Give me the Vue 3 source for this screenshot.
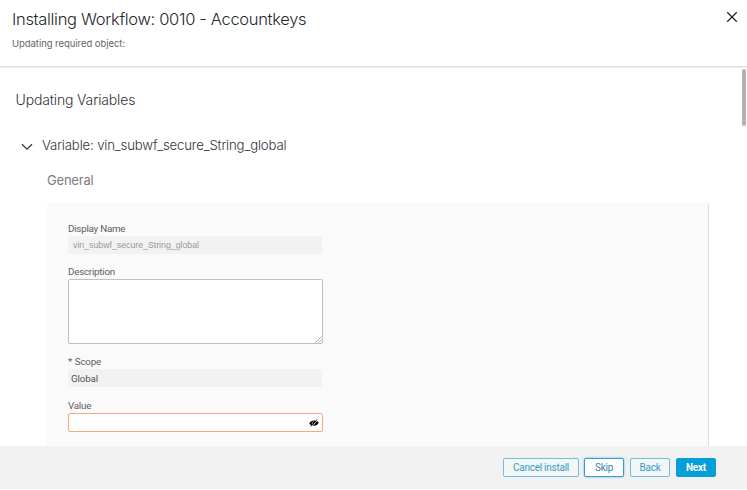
<script setup>
import { ref } from 'vue'

const displayName = ref('vin_subwf_secure_String_global')
const description = ref('')
const scope = ref('Global')
const secret = ref('')
const actions = [
  { label: 'Cancel install', kind: 'cancel' },
  { label: 'Skip', kind: 'skip' },
  { label: 'Back', kind: 'back' },
  { label: 'Next', kind: 'next' },
]
</script>

<template>
  <div class="dialog">
    <header class="header">
      <div>
        <h1 class="title"><span>Installing Workflow: 0010 - Accountkeys</span></h1>
        <p class="subtitle"><span>Updating required object:</span></p>
      </div>
      <svg class="close" width="12" height="12" viewBox="0 0 12 12">
        <path d="M1.2 1.2 10.8 10.8M10.8 1.2 1.2 10.8" fill="none" stroke="#222629" stroke-width="1.25" />
      </svg>
    </header>

    <main class="body">
      <div class="content">
        <h2 class="section"><span>Updating Variables</span></h2>
        <div class="variable">
          <svg class="chevron" width="12" height="8" viewBox="0 0 12 8">
            <path d="M1 1.3 6 6.2 11 1.3" fill="none" stroke="#34383b" stroke-width="1.3" />
          </svg>
          <h3 class="variable-name"><span>Variable: vin_subwf_secure_String_global</span></h3>
        </div>
        <h4 class="group"><span>General</span></h4>
        <div class="panel">
          <label class="label first"><span>Display Name</span></label>
          <div class="readonly muted"><span>{{ displayName }}</span></div>
          <label class="label second"><span>Description</span></label>
          <div class="area-wrap">
            <textarea v-model="description" class="area"></textarea>
            <svg class="grip" width="7" height="7" viewBox="0 0 7 7">
              <path d="M.5 6.5 6.5.5M3.5 6.5 6.5 3.5" fill="none" stroke="#929496" stroke-width=".8" />
            </svg>
          </div>
          <label class="label third"><span>* Scope</span></label>
          <div class="readonly"><span>{{ scope }}</span></div>
          <label class="label fourth"><span>Value</span></label>
          <div class="secret">
            <input v-model="secret" type="password" />
            <svg width="10" height="10" viewBox="0 0 10 10">
              <path d="M.3 5.4C1.6 1.9 8.2 1.6 9.7 4.8 8.4 8.6 2 8.8.3 5.4Z" fill="#0b0b0b" />
              <path d="M3.4 6.2Q2.9 4.2 4.6 3.6" fill="none" stroke="#fff" stroke-width=".5" />
              <path d="M2.2 9 8.9 1.9" stroke="#fff" stroke-width=".7" />
              <path d="M1.5 8.6 8.3 1.2" stroke="#111" stroke-width=".8" />
            </svg>
          </div>
        </div>
      </div>
      <div class="track"><div class="thumb"></div></div>
    </main>

    <footer class="footer">
      <button v-for="a in actions" :key="a.label" class="btn" :class="a.kind"><span>{{ a.label }}</span></button>
    </footer>
  </div>
</template>

<style>
body {
  background: #fff;
  overflow: hidden;
}
</style>

<style scoped>
* {
  box-sizing: border-box;
  margin: 0;
}
.dialog {
  width: 747px;
  height: 489px;
  display: flex;
  flex-direction: column;
  font-family: Inter, "Liberation Sans", sans-serif;
  white-space: nowrap;
}
.header {
  height: 67px;
  flex: none;
  display: flex;
  justify-content: space-between;
  padding: 8px 9.5px 0 12px;
  border-bottom: 1px solid #dedfdf;
  box-shadow: 0 1px 1px #eeefef;
}
.title {
  font-size: 16.5px;
  letter-spacing: -.32px;
  line-height: 22px;
  font-weight: 300;
  color: #24282b;
}
.subtitle {
  margin-top: 5px;
  font-size: 9.5px;
  letter-spacing: -.05px;
  line-height: 17px;
  color: #626669;
}
.close {
  margin-top: 3px;
}
.body {
  flex: 1;
  min-height: 0;
  display: flex;
  justify-content: space-between;
  overflow: hidden;
}
.content {
  width: 709px;
}
.section {
  margin: 23px 0 0 15.5px;
  font-size: 14px;
  letter-spacing: -.15px;
  line-height: 20px;
  font-weight: 300;
  color: #303437;
}
.variable {
  display: flex;
  align-items: center;
  margin: 25px 0 0 21px;
}
.chevron {
  margin-top: 4px;
}
.variable-name {
  margin-left: 9px;
  font-size: 13.2px;
  letter-spacing: -.16px;
  line-height: 20px;
  font-weight: 300;
  color: #303437;
}
.group {
  margin: 15px 0 0 47px;
  font-size: 13px;
  letter-spacing: -.2px;
  line-height: 20px;
  font-weight: 400;
  color: #7b7e80;
}
.panel {
  height: 270px;
  margin: 13px 0 0 47px;
  padding: 18px 0 0 21px;
  background: #fafafa;
  border-right: 1px solid #dededf;
  border-radius: 2px;
}
.label {
  display: block;
  font-family: Roboto, sans-serif;
  font-size: 9.8px;
  letter-spacing: -.24px;
  line-height: 14px;
  color: #5b5f62;
}
.first { padding-top: 1px; height: 14px; }
.label + .readonly { margin-top: 1px; }
.second { margin-top: 11px; }
.third { margin-top: 11px; word-spacing: .7px; }
.third + .readonly { margin-top: 0; }
.fourth { margin-top: 12px; }
.readonly {
  width: 254px;
  height: 18px;
  padding-left: 3px;
  background: #f2f2f2;
  border-radius: 2px;
  font-family: Roboto, sans-serif;
  font-size: 9.8px;
  letter-spacing: -.15px;
  line-height: 19px;
  color: #53575a;
}
.muted {
  padding-left: 5px;
  font-family: "Liberation Sans", sans-serif;
  font-size: 8.75px;
  letter-spacing: 0;
  line-height: 18px;
  color: #989a9c;
}
.area-wrap {
  position: relative;
  width: 255px;
  height: 65px;
}
.area {
  display: block;
  width: 100%;
  height: 100%;
  border: 1px solid #bfc0c1;
  border-radius: 2px;
  background: #fff;
  resize: none;
}
.grip {
  position: absolute;
  right: 1px;
  bottom: 1px;
}
.secret {
  width: 255px;
  height: 19px;
  display: flex;
  align-items: center;
  padding-right: 3px;
  border: 1px solid #fba878;
  border-radius: 2px;
  background: #fff;
}
.secret input {
  flex: 1;
  min-width: 0;
  height: 15px;
  border: 0;
  outline: 0;
  background: transparent;
}
.track {
  width: 5px;
  padding-top: 2px;
}
.thumb {
  width: 4px;
  height: 57px;
  border-radius: 2px;
  background: #aeb2b4;
}
.footer {
  height: 43px;
  flex: none;
  display: flex;
  align-items: center;
  justify-content: flex-end;
  padding-right: 31px;
  background: #f1f1f1;
}
.btn {
  height: 19px;
  padding: 0;
  border: 1px solid #6dbfde;
  border-radius: 2px;
  background: #f4f5f5;
  color: #319fcb;
  font: 400 10px/15px Roboto, sans-serif;
}
.cancel { width: 76px; margin-right: 5px; }
.cancel, .skip, .back { letter-spacing: -.25px; }
.skip {
  width: 40px;
  margin-right: 6px;
  background: #fff;
  border-color: #369fc5;
  color: #3486a8;
  box-shadow: 0 0 2px #49afd5;
}
.back { width: 40px; margin-right: 6px; }
.next {
  width: 40px;
  background: #049fd9;
  border-color: #049fd9;
  color: #fff;
  font-size: 10px;
  font-weight: 700;
  letter-spacing: -.2px;
}
</style>
